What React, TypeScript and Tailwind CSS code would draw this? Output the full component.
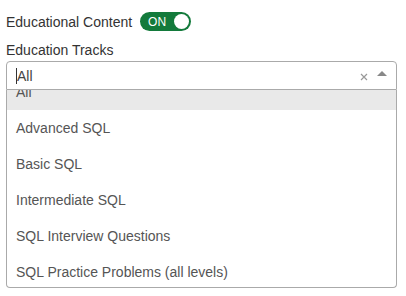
import React from "react";

const items = [
  "All",
  "Advanced SQL",
  "Basic SQL",
  "Intermediate SQL",
  "SQL Interview Questions",
  "SQL Practice Problems (all levels)",
];

export default function App() {
  return (
    <div
      className="w-[406px] h-[296px] bg-white pt-[12px] pl-[6px] text-[14px] text-[#333]"
      style={{ fontFamily: '"Liberation Sans", Arial, sans-serif' }}
    >
      <div className="flex items-center h-[19px] gap-[8px]">
        <span className="leading-[18px]">Educational Content</span>
        <div className="relative w-[51px] h-[19px] rounded-full bg-[#137a3b] flex items-center">
          <span className="text-white text-[12px] leading-none pl-[8px]">ON</span>
          <span className="absolute right-[2px] top-[2px] w-[15px] h-[15px] rounded-full bg-white" />
        </div>
      </div>
      <div className="mt-[9px] h-[20px] leading-[20px]">Education Tracks</div>
      <div className="mt-[1px] w-[391px]">
        <div className="h-[29px] border border-[#aaa] rounded-t-[4px] flex items-center pl-[9px] pr-[9px]">
          <span className="w-px h-[16px] bg-[#333]" />
          <span className="text-[#444] leading-none">All</span>
          <span className="flex-1" />
          <svg width="8" height="8" viewBox="0 0 8 8" className="mr-[9px] mt-[2px]">
            <path d="M1 1 L7 7 M7 1 L1 7" stroke="#999" strokeWidth="1.2" />
          </svg>
          <svg width="10" height="5" viewBox="0 0 10 5" className="mt-[-5px]">
            <path d="M0 5 L5 0 L10 5 Z" fill="#888" />
          </svg>
        </div>
        <div className="h-[198px] border border-t-0 border-[#aaa] rounded-b-[4px] overflow-hidden">
          <div className="-mt-[16px]">
            {items.map((it, i) => (
              <div
                key={it}
                className={
                  "h-[36px] flex items-center pl-[9px] text-[#555] " +
                  (i === 0 ? "bg-[#e9e9e9]" : "")
                }
              >
                {it}
              </div>
            ))}
          </div>
        </div>
      </div>
    </div>
  );
}
